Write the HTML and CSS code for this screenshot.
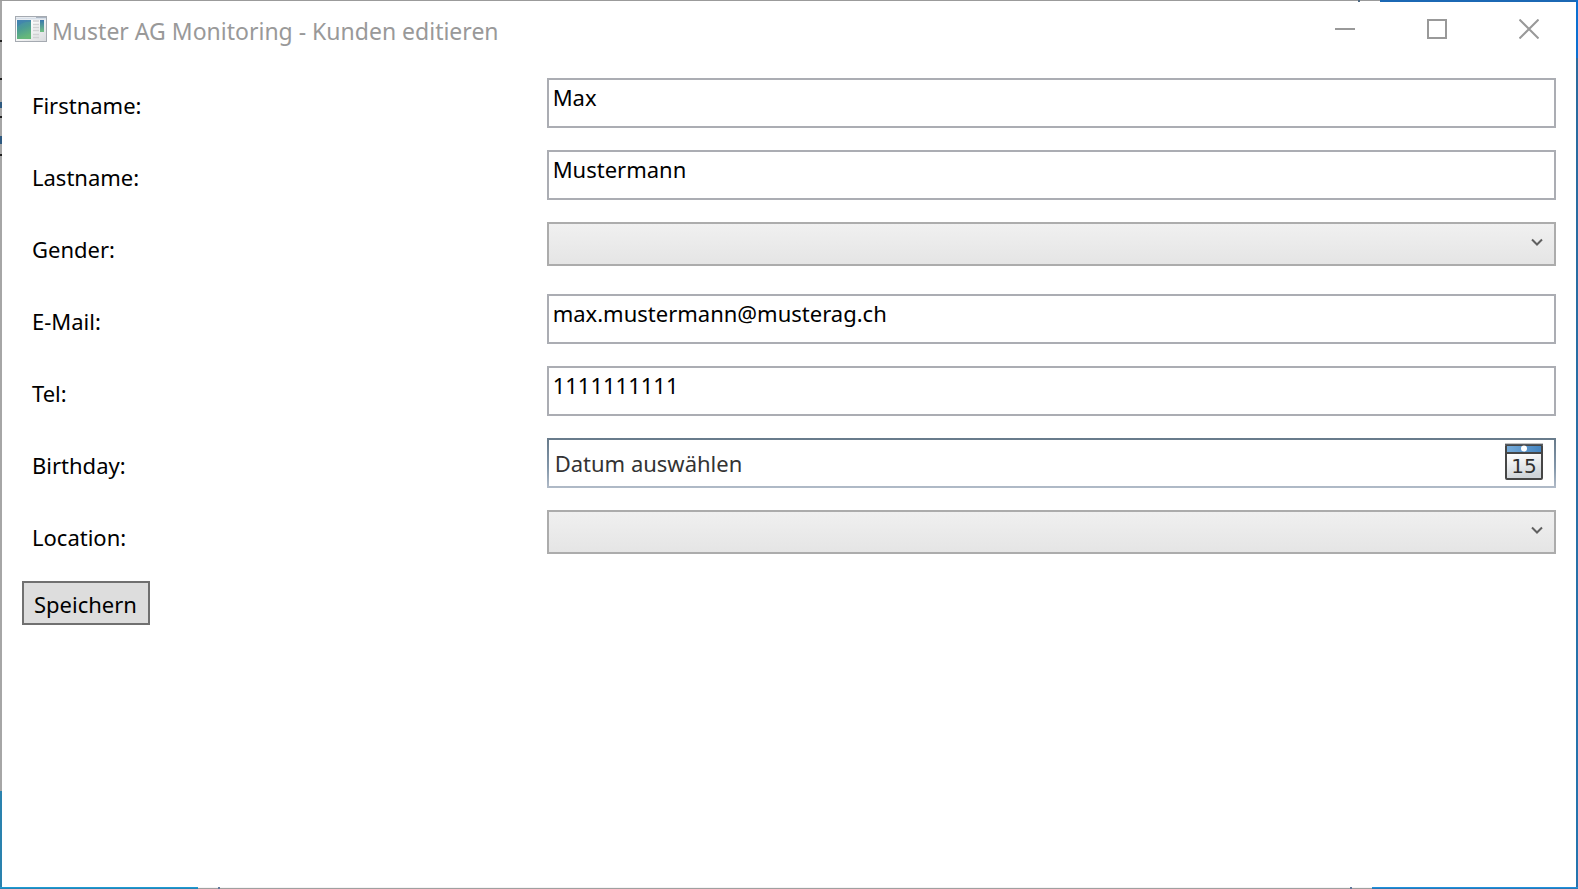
FILE: index.html
```html
<!DOCTYPE html>
<html lang="de">
<head>
<meta charset="utf-8">
<meta name="viewport" content="width=device-width, initial-scale=1">
<title>Muster AG Monitoring - Kunden editieren</title>
<link rel="stylesheet" href="styles.css">
</head>
<body class="desktop">
<main class="window">
  <header class="titlebar">
    <svg class="app-icon" width="32" height="26" viewBox="0 0 32 26" aria-hidden="true">
      <defs>
        <linearGradient id="pane" x1="0" y1="0" x2="0.3" y2="1"><stop offset="0" stop-color="#4586b4"/><stop offset="0.5" stop-color="#4b9c95"/><stop offset="1" stop-color="#66b87a"/></linearGradient>
        <linearGradient id="sheet" x1="0" y1="0" x2="1" y2="1"><stop offset="0.4" stop-color="#fafafa"/><stop offset="1" stop-color="#d8dadd"/></linearGradient>
        <linearGradient id="strip" x1="0" y1="0" x2="0" y2="1"><stop offset="0" stop-color="#3978ae"/><stop offset="1" stop-color="#72c082"/></linearGradient>
      </defs>
      <rect x="0.5" y="0.5" width="31" height="25" fill="url(#sheet)" stroke="#a5aab1"/>
      <path d="M1 2.5H31" stroke="#d6dfe9" stroke-width="2"/>
      <path d="M21 1.5H31" stroke="#a9b3c0"/>
      <rect x="2" y="4" width="14" height="19" fill="url(#pane)"/>
      <path d="M2 11Q8 5 16 6V4H2Z" fill="#3d7db2" opacity="0.5"/>
      <path d="M18 5h6M18 8.500h6M18 11.500h6M18 14.500h6M18 18.500h6M18 21.500h6" stroke="#d0d1d3" stroke-width="1.500"/>
      <rect x="25" y="4" width="4" height="12" fill="url(#strip)"/>
    </svg>
    <h1 class="title">Muster AG Monitoring - Kunden editieren</h1>
    <div class="controls">
      <button class="control" type="button" aria-label="Minimieren"><svg width="20" height="20" viewBox="0 0 20 20"><path d="M0 10H20"/></svg></button>
      <button class="control" type="button" aria-label="Maximieren"><svg width="20" height="20" viewBox="0 0 20 20"><rect x="1" y="1" width="18" height="18"/></svg></button>
      <button class="control" type="button" aria-label="Schliessen"><svg width="20" height="20" viewBox="0 0 20 20"><path d="M0.500 0.500L19.500 19.500M19.500 0.500L0.500 19.500"/></svg></button>
    </div>
  </header>
  <form class="form">
    <div class="row"><label class="label" for="firstname">Firstname:</label><div class="cell"><input class="field" id="firstname" type="text" value="Max"></div></div>
    <div class="row"><label class="label" for="lastname">Lastname:</label><div class="cell"><input class="field" id="lastname" type="text" value="Mustermann"></div></div>
    <div class="row"><label class="label" for="gender">Gender:</label>
      <div class="cell"><div class="combo"><select class="select" id="gender"><option value=""></option></select><svg class="chevron" width="12" height="9" viewBox="0 0 12 9" aria-hidden="true"><path d="M1 1.500L6 6.500L11 1.500"/></svg></div></div></div>
    <div class="row"><label class="label" for="email">E-Mail:</label><div class="cell"><input class="field" id="email" type="text" value="max.mustermann@musterag.ch"></div></div>
    <div class="row"><label class="label" for="tel">Tel:</label><div class="cell"><input class="field" id="tel" type="text" value="1111111111"></div></div>
    <div class="row"><label class="label" for="birthday">Birthday:</label>
      <div class="cell"><div class="date"><input class="date-input" id="birthday" type="text" placeholder="Datum auswählen">
        <button class="date-button" type="button" aria-label="Kalender">
          <svg width="38" height="38" viewBox="0 0 38 38" aria-hidden="true">
            <defs>
              <linearGradient id="page" x1="0" y1="0" x2="0.2" y2="1"><stop offset="0.3" stop-color="#fff"/><stop offset="1" stop-color="#cfd4d9"/></linearGradient>
              <linearGradient id="head" x1="0" y1="0" x2="1" y2="0"><stop offset="0" stop-color="#76abd9"/><stop offset="1" stop-color="#4484c0"/></linearGradient>
            </defs>
            <path d="M0 0.500H38" stroke="#c3c3c3"/>
            <rect x="1" y="2" width="36" height="34" rx="1" fill="url(#page)" stroke="#464646" stroke-width="2"/>
            <rect x="2" y="3" width="34" height="6" fill="url(#head)"/>
            <path d="M1 10H37" stroke="#464646" stroke-width="2"/>
            <path d="M0 1.500H38" stroke="#555b62"/>
            <circle cx="19" cy="5.500" r="3" fill="#fff"/>
            <text class="date-number" x="19" y="30" text-anchor="middle">15</text>
          </svg>
        </button></div></div></div>
    <div class="row"><label class="label" for="location">Location:</label>
      <div class="cell"><div class="combo"><select class="select" id="location"><option value=""></option></select><svg class="chevron" width="12" height="9" viewBox="0 0 12 9" aria-hidden="true"><path d="M1 1.500L6 6.500L11 1.500"/></svg></div></div></div>
    <button class="save" type="button">Speichern</button>
  </form>
</main>
</body>
</html>
```
FILE: styles.css
```css
* { box-sizing: border-box; }

.desktop {
  margin: 0;
  min-height: 100vh;
  padding: 2px;
  display: flex;
  font-family: "Noto Sans", "Open Sans", sans-serif;
  font-size: 22px;
  line-height: 32px;
  color: #000;
  background:
    linear-gradient(#202020, #202020) 0 40px / 2px 2px no-repeat,
    linear-gradient(#202020, #202020) 0 78px / 2px 2px no-repeat,
    linear-gradient(#202020, #202020) 0 116px / 2px 2px no-repeat,
    linear-gradient(#202020, #202020) 0 154px / 2px 2px no-repeat,
    linear-gradient(#2e5980, #2e5980) 0 102px / 2px 6px no-repeat,
    linear-gradient(#2e5980, #2e5980) 0 136px / 2px 8px no-repeat,
    linear-gradient(#4f6a85, #4f6a85) 1358px 0 / 2px 2px no-repeat,
    linear-gradient(#61789a, #61789a) 218px 100% / 2px 2px no-repeat,
    linear-gradient(#61789a, #61789a) 1350px 100% / 2px 2px no-repeat,
    linear-gradient(#9b9b9b, #9b9b9b) 0 0 / 1380px 1px no-repeat,
    linear-gradient(90deg, #2485b5 198px, #a0a0a0 198px 1372px, #2878b4 1372px) 0 100% / 100% 1px no-repeat,
    linear-gradient(90deg, #1f9ad2 198px, #f4f4f4 198px 1372px, #2090dc 1372px) 0 calc(100% - 1px) / 100% 1px no-repeat,
    linear-gradient(#a6a6a6 791px, #2a82ae 791px) 0 0 / 2px 100% no-repeat,
    linear-gradient(#0c6fd0 58px, #2a6a9e 58px, #2474ae) 100% 0 / 2px 100% no-repeat,
    linear-gradient(90deg, #fff 1380px, #1b68b4 1380px) 0 0 / 100% 2px no-repeat,
    #fff;
}

.window { flex: 1; min-width: 0; background: #fff; }

.titlebar { display: flex; align-items: center; height: 54px; padding-left: 13px; gap: 5px; }
.app-icon { flex: none; }
.title { flex: 1; margin: 0; padding-top: 3px; font-size: 23px; font-weight: 400; color: #999; white-space: nowrap; }
.controls { display: flex; padding-right: 1px; }
.control { display: flex; align-items: center; justify-content: center; width: 92px; height: 54px; padding: 0; border: 0; background: none; }
.control svg { fill: none; stroke: #999; stroke-width: 2; }

.form { padding: 22px 0 20px; }
.row { display: grid; grid-template-columns: minmax(0, 1fr) minmax(0, 2fr); height: 72px; }
.label { padding: 11px 0 0 30px; }
.cell { padding: 0 20px; }

.field { display: block; width: 100%; height: 50px; padding: 0 4px 12px; border: 2px solid #abadb3; border-radius: 0; background: #fff; font: inherit; color: #000; }

.combo { display: grid; grid-template-columns: 1fr auto; align-items: center; height: 44px; border: 2px solid #acacac; background: linear-gradient(#f0f0f0, #e5e5e5); }
.select { grid-area: 1 / 1 / 2 / 3; width: 100%; height: 100%; padding: 0 8px; border: 0; background: none; appearance: none; font: inherit; }
.chevron { grid-area: 1 / 2; margin: 0 11px 4px 0; pointer-events: none; fill: none; stroke: #606060; stroke-width: 2; }

.date { display: flex; align-items: center; height: 50px; padding: 0 11px 2px 6px; border: 2px solid; border-image: linear-gradient(#687b8b, #8296a9 60%, #b0bac7) 1; }
.date-input { flex: 1; min-width: 0; height: 44px; padding: 2px 0 0; border: 0; background: none; font: inherit; color: #333; }
.date-input::placeholder { color: #333; opacity: 1; }
.date-button { display: flex; padding: 0; border: 0; background: none; }
.date-number { font-family: "DejaVu Sans", sans-serif; font-size: 20px; fill: #2f2f2f; }

.save { display: block; height: 44px; margin: -1px 20px 0; padding: 2px 11px 0 10px; border: 2px solid #707070; border-radius: 0; background: #ddd; font: inherit; color: #000; }
```
